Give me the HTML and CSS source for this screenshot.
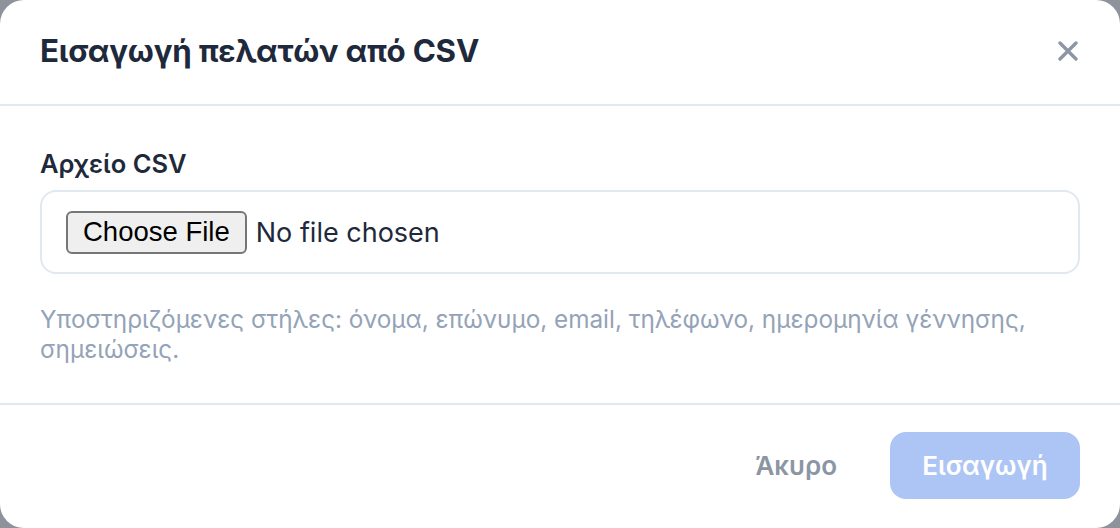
FILE: index.html
```html
<!DOCTYPE html>
<html lang="el">
<head>
<meta charset="utf-8">
<title>Εισαγωγή πελατών από CSV</title>
<link rel="stylesheet" href="styles.css">
</head>
<body>
<div class="modal">
  <header class="modal-header">
    <h2 class="modal-title">Εισαγωγή πελατών από CSV</h2>
    <button class="close-btn" aria-label="Κλείσιμο">
      <svg width="20" height="20" viewBox="0 0 20 20" fill="none" stroke="currentColor" stroke-width="3.4" stroke-linecap="round"><path d="M2 2L18 18M18 2L2 18"/></svg>
    </button>
  </header>
  <section class="modal-body">
    <label class="field-label">Αρχείο CSV</label>
    <div class="file-box">
      <span class="file-btn">Choose File</span>
      <span class="file-name">No file chosen</span>
    </div>
    <p class="help">Υποστηριζόμενες στήλες: όνομα, επώνυμο, email, τηλέφωνο, ημερομηνία γέννησης, σημειώσεις.</p>
  </section>
  <footer class="modal-footer">
    <button class="btn-cancel">Άκυρο</button>
    <button class="btn-primary">Εισαγωγή</button>
  </footer>
</div>
</body>
</html>
```
FILE: styles.css
```css
* { box-sizing: border-box; }
html, body { margin: 0; padding: 0; }
body {
  background: #8e939b;
  font-family: Inter, "Noto Sans", sans-serif;
  width: 1120px;
  height: 528px;
  overflow: hidden;
}
.modal {
  background: #ffffff;
  border-radius: 24px;
  width: 1120px;
  height: 528px;
  display: flex;
  flex-direction: column;
  overflow: hidden;
}
.modal-header {
  height: 106px;
  border-bottom: 2px solid #e2e8f0;
  display: flex;
  align-items: center;
  justify-content: space-between;
  padding: 0 42px 2px 40px;
}
.modal-title {
  margin: 0;
  font-size: 31.3px;
  font-weight: 700;
  color: #1e293b;
  letter-spacing: -0.2px;
}
.close-btn {
  background: none;
  border: 0;
  padding: 0;
  color: #8c96a4;
  display: flex;
  cursor: pointer;
}
.modal-body {
  padding: 40px 40px 39px;
  border-bottom: 2px solid #e2e8f0;
}
.field-label {
  display: block;
  font-size: 25.5px;
  line-height: 36px;
  font-weight: 600;
  color: #1e293b;
  margin-bottom: 8px;
}
.file-box {
  height: 84px;
  border: 2px solid #e2e8f0;
  border-radius: 16px;
  display: flex;
  align-items: center;
  padding: 0 24px;
  gap: 9px;
}
.file-btn {
  font-family: "Liberation Sans", Arial, sans-serif;
  font-size: 27.5px;
  color: #000;
  background: #efefef;
  border: 2px solid #767676;
  border-radius: 6px;
  height: 43px;
  padding: 0 15px;
  display: flex;
  align-items: center;
}
.file-name {
  font-size: 27px;
  color: #1e293b;
}
.help {
  margin: 30px 0 0;
  font-size: 24.3px;
  line-height: 30px;
  color: #94a3b8;
}
.modal-footer {
  flex: 1;
  display: flex;
  justify-content: flex-end;
  align-items: center;
  padding: 0 40px 2px;
  gap: 20px;
}
.btn-cancel {
  background: none;
  border: 0;
  font-family: inherit;
  font-size: 26px;
  font-weight: 600;
  color: #8b95a3;
  padding: 0 33px;
  height: 67px;
}
.btn-primary {
  background: #adc5f5;
  border: 0;
  border-radius: 16px;
  font-family: inherit;
  font-size: 26px;
  font-weight: 600;
  color: #ffffff;
  width: 190px;
  height: 67px;
}
```
